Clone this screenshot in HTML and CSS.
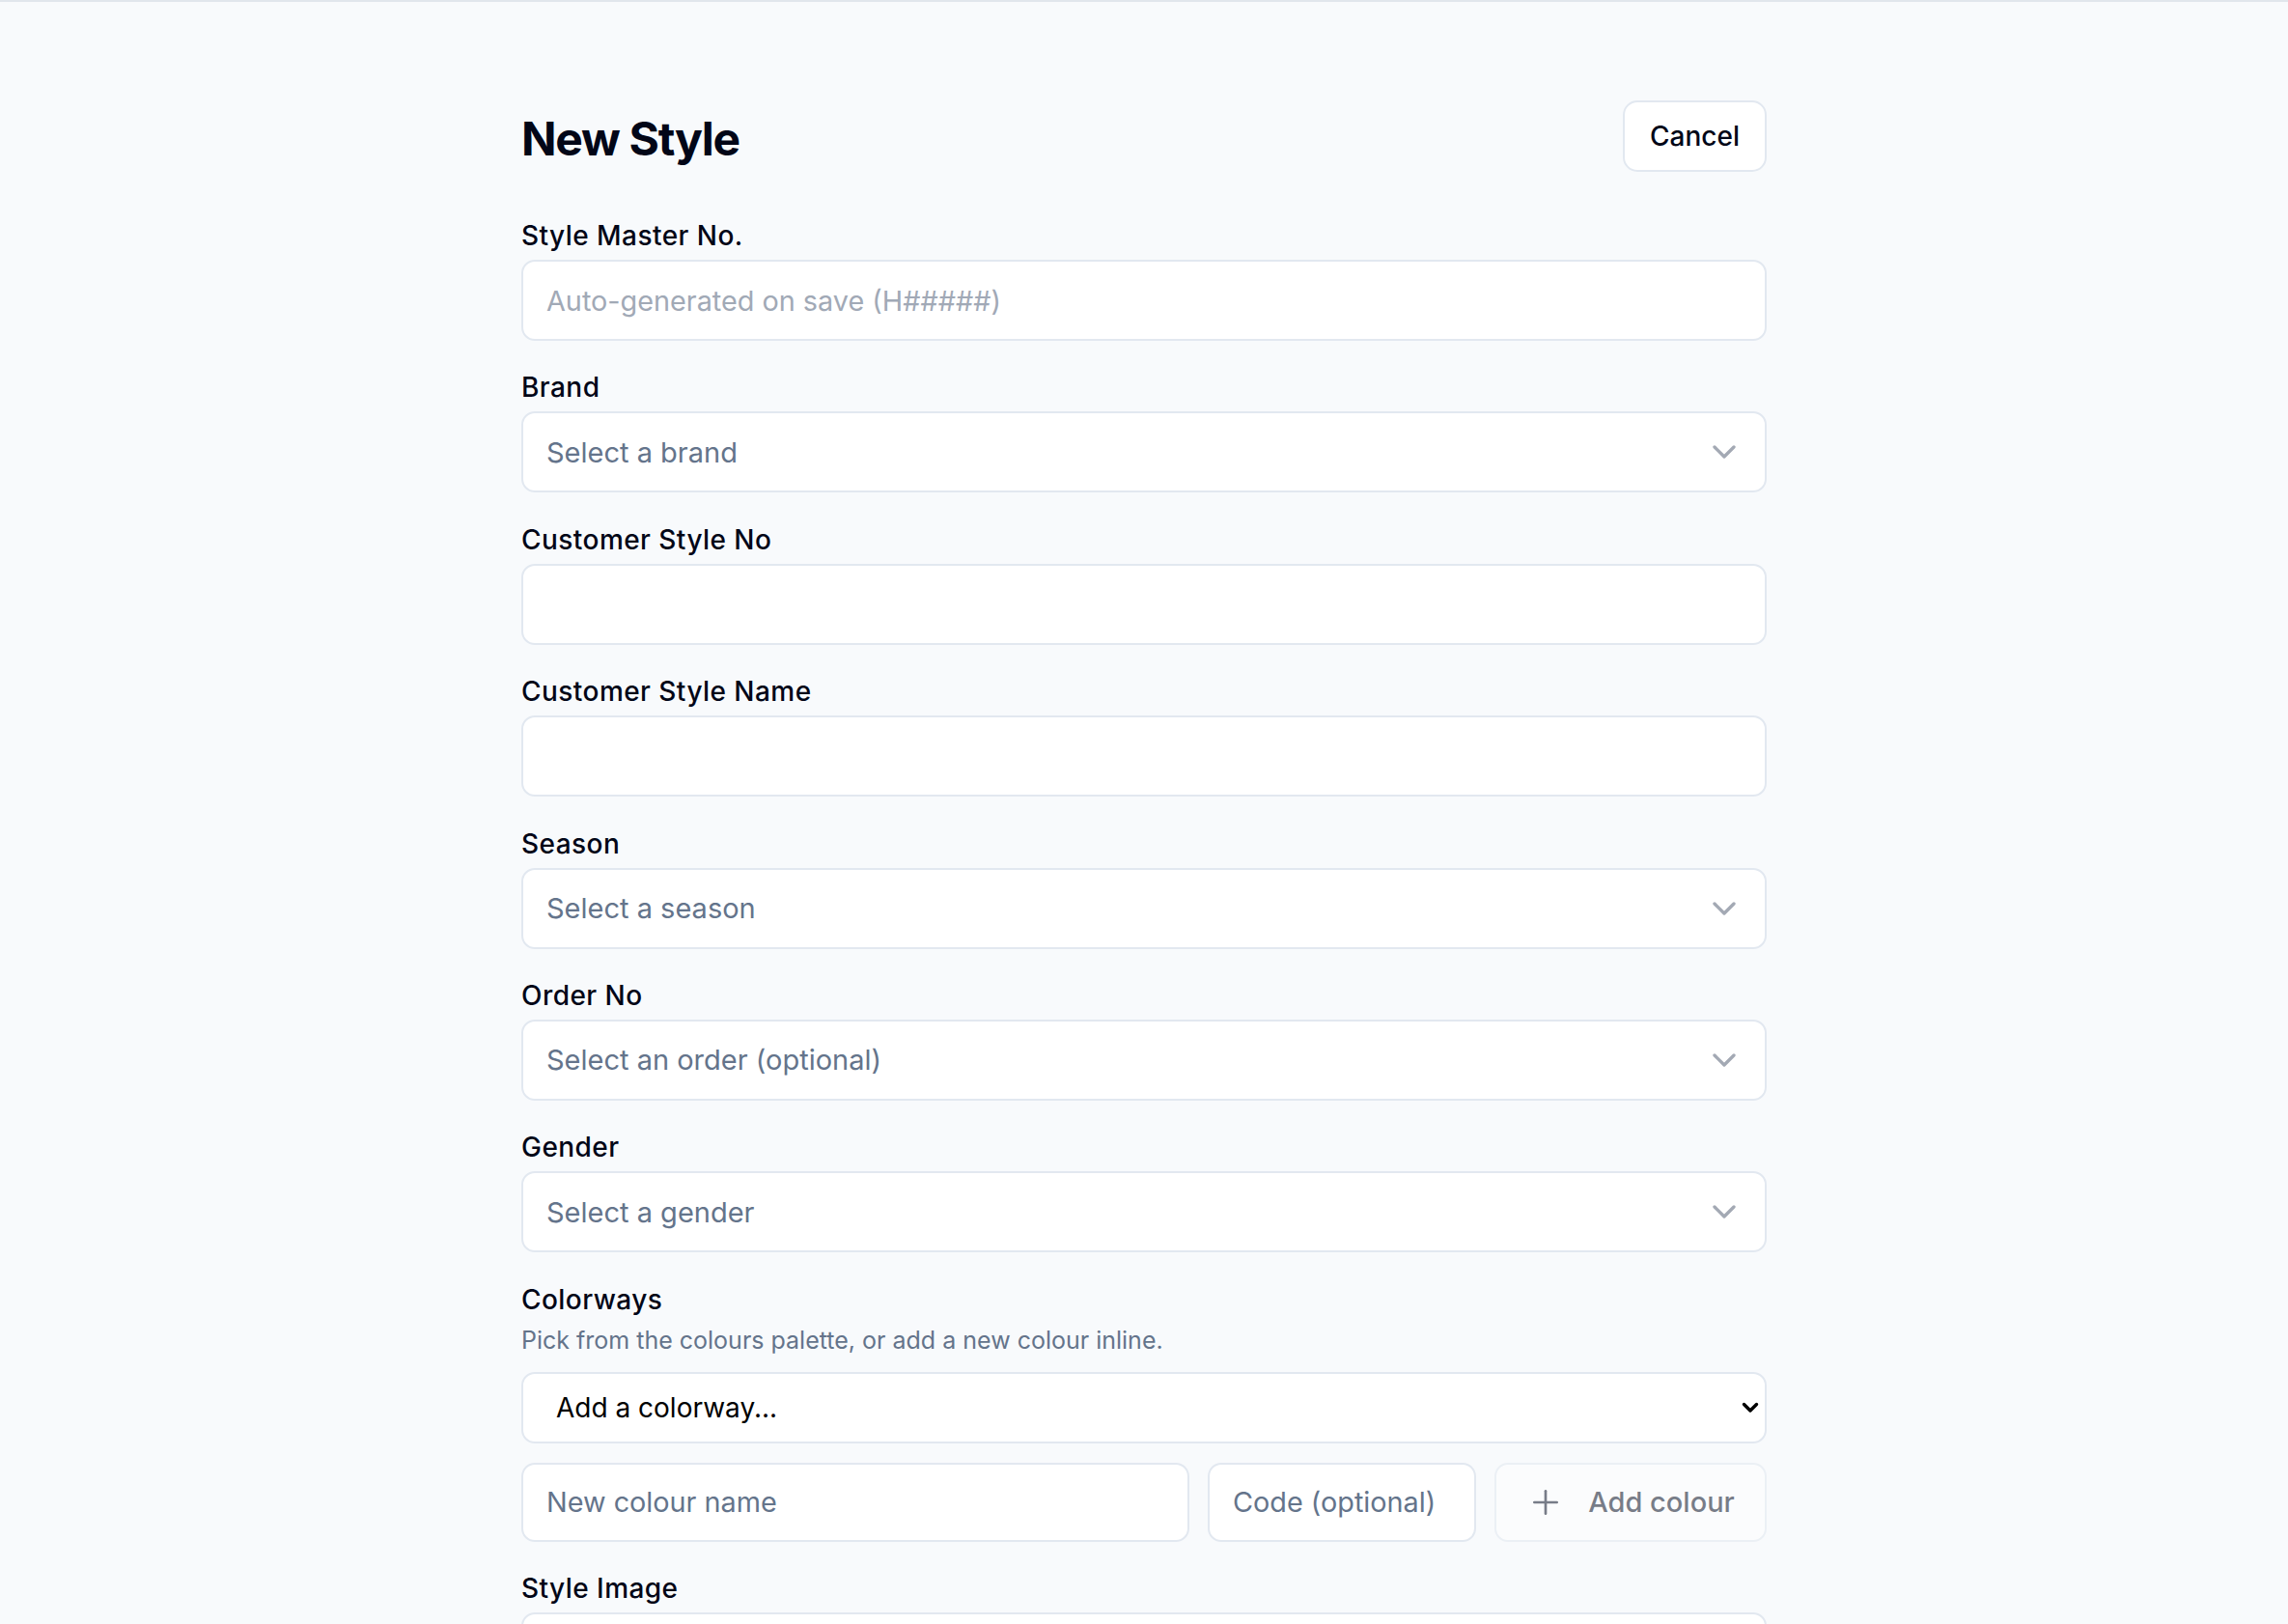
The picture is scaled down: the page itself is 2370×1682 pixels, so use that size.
FILE: index.html
```html
<!DOCTYPE html>
<html lang="en">
<head>
<meta charset="utf-8">
<title>New Style</title>
<link rel="stylesheet" href="styles.css">
</head>
<body>
<div class="topline"></div>
<main class="page">
  <header class="head">
    <h1 class="title">New Style</h1>
    <button type="button" class="btn-outline">Cancel</button>
  </header>

  <form class="form">
    <div class="field">
      <label class="label">Style Master No.</label>
      <input class="input input-auto" type="text" placeholder="Auto-generated on save (H#####)" readonly>
    </div>

    <div class="field">
      <label class="label">Brand</label>
      <button type="button" class="select-trigger">
        <span>Select a brand</span>
        <svg class="chev" viewBox="0 0 24 24" fill="none" stroke-width="2" stroke-linecap="round" stroke-linejoin="round"><path d="m6 9 6 6 6-6"/></svg>
      </button>
    </div>

    <div class="field">
      <label class="label">Customer Style No</label>
      <input class="input" type="text">
    </div>

    <div class="field">
      <label class="label">Customer Style Name</label>
      <input class="input" type="text">
    </div>

    <div class="field">
      <label class="label">Season</label>
      <button type="button" class="select-trigger">
        <span>Select a season</span>
        <svg class="chev" viewBox="0 0 24 24" fill="none" stroke-width="2" stroke-linecap="round" stroke-linejoin="round"><path d="m6 9 6 6 6-6"/></svg>
      </button>
    </div>

    <div class="field">
      <label class="label">Order No</label>
      <button type="button" class="select-trigger">
        <span>Select an order (optional)</span>
        <svg class="chev" viewBox="0 0 24 24" fill="none" stroke-width="2" stroke-linecap="round" stroke-linejoin="round"><path d="m6 9 6 6 6-6"/></svg>
      </button>
    </div>

    <div class="field">
      <label class="label">Gender</label>
      <button type="button" class="select-trigger">
        <span>Select a gender</span>
        <svg class="chev" viewBox="0 0 24 24" fill="none" stroke-width="2" stroke-linecap="round" stroke-linejoin="round"><path d="m6 9 6 6 6-6"/></svg>
      </button>
    </div>

    <div class="field">
      <label class="label">Colorways</label>
      <p class="hint">Pick from the colours palette, or add a new colour inline.</p>
      <div class="native-select">
        <select class="native">
          <option>Add a colorway...</option>
        </select>
        <svg class="native-arrow" viewBox="0 0 18 12" fill="none" stroke-width="3.4" stroke-linecap="round" stroke-linejoin="round"><path d="M2.5 2.5 9 9l6.5-6.5"/></svg>
      </div>
      <div class="add-row">
        <input class="input input-row input-name" type="text" placeholder="New colour name">
        <input class="input input-row input-code" type="text" placeholder="Code (optional)">
        <button type="button" class="btn-add" disabled>
          <svg class="plus" viewBox="0 0 24 24" fill="none" stroke-width="1.6" stroke-linecap="round" stroke-linejoin="round"><path d="M5 12h14"/><path d="M12 5v14"/></svg>
          <span>Add colour</span>
        </button>
      </div>
    </div>

    <div class="field">
      <label class="label">Style Image</label>
      <div class="dropzone"></div>
    </div>
  </form>
</main>
</body>
</html>
```

FILE: styles.css
```css
* {
  box-sizing: border-box;
}

html,
body {
  margin: 0;
  padding: 0;
  background: #f8fafc;
  font-family: Inter, "Noto Sans", "Liberation Sans", sans-serif;
  color: #020617;
  overflow: hidden;
}

.topline {
  height: 2px;
  background: #e1e6ec;
}

.page {
  width: 1290px;
  margin: 0 auto;
  padding-top: 102px;
}

.head {
  display: flex;
  justify-content: space-between;
  align-items: flex-start;
  margin-bottom: 46px;
}

.title {
  margin: 0;
  padding-top: 8px;
  padding-bottom: 2px;
  font-size: 48px;
  line-height: 64px;
  font-weight: 700;
  letter-spacing: -1.3px;
  color: #020617;
}

.btn-outline {
  height: 74px;
  padding: 0 26px;
  border: 2px solid #e2e8f0;
  border-radius: 15px;
  background: #ffffff;
  font-family: inherit;
  font-size: 28px;
  font-weight: 500;
  color: #020617;
}

.form {
  display: flex;
  flex-direction: column;
  gap: 28.4px;
}

.field {
  display: flex;
  flex-direction: column;
}

.label {
  font-size: 28px;
  line-height: 40px;
  font-weight: 500;
  letter-spacing: 0.45px;
  color: #020617;
  margin-bottom: 5px;
}

.input {
  height: 84px;
  width: 100%;
  padding: 0 24px;
  border: 2px solid #e2e8f0;
  border-radius: 14px;
  background: #ffffff;
  font-family: inherit;
  font-size: 28.8px;
  color: #020617;
  outline: none;
}

.input::placeholder {
  color: #64748b;
}

.input-auto::placeholder {
  color: #a1a9b6;
}

.select-trigger {
  height: 84px;
  width: 100%;
  display: flex;
  align-items: center;
  justify-content: space-between;
  padding: 0 22px 0 24px;
  border: 2px solid #e2e8f0;
  border-radius: 14px;
  background: #ffffff;
  font-family: inherit;
  font-size: 29px;
  color: #64748b;
  text-align: left;
}

.chev {
  width: 40px;
  height: 40px;
  stroke: #a3a9b4;
  flex: none;
}

.hint {
  margin: 0;
  font-size: 25px;
  line-height: 34px;
  color: #64748b;
}

.native-select {
  position: relative;
  margin-top: 16px;
}

.native {
  appearance: none;
  -webkit-appearance: none;
  width: 100%;
  height: 74px;
  padding: 0 60px 0 34px;
  border: 2px solid #e2e8f0;
  border-radius: 14px;
  background: #ffffff;
  font-family: inherit;
  font-size: 28px;
  color: #000000;
}

.native-arrow {
  position: absolute;
  right: 8px;
  top: 31px;
  width: 18px;
  height: 12px;
  stroke: #000000;
  pointer-events: none;
}

.add-row {
  display: flex;
  gap: 19px;
  margin-top: 20px;
}

.input-row {
  height: 82px;
}

.input-name {
  flex: 1;
  min-width: 0;
}

.input-code {
  flex: none;
  width: 278px;
}

.btn-add {
  flex: none;
  width: 282px;
  height: 82px;
  display: flex;
  align-items: center;
  justify-content: center;
  gap: 24px;
  border: 2px solid #e2e8f0;
  border-radius: 14px;
  background: #ffffff;
  font-family: inherit;
  font-size: 29px;
  font-weight: 500;
  color: #0f172a;
  opacity: 0.55;
}

.plus {
  width: 40px;
  height: 40px;
  stroke: #0f172a;
  flex: none;
}

.dropzone {
  height: 160px;
  border: 2px solid #e2e8f0;
  border-radius: 14px;
  background: #ffffff;
}
```
